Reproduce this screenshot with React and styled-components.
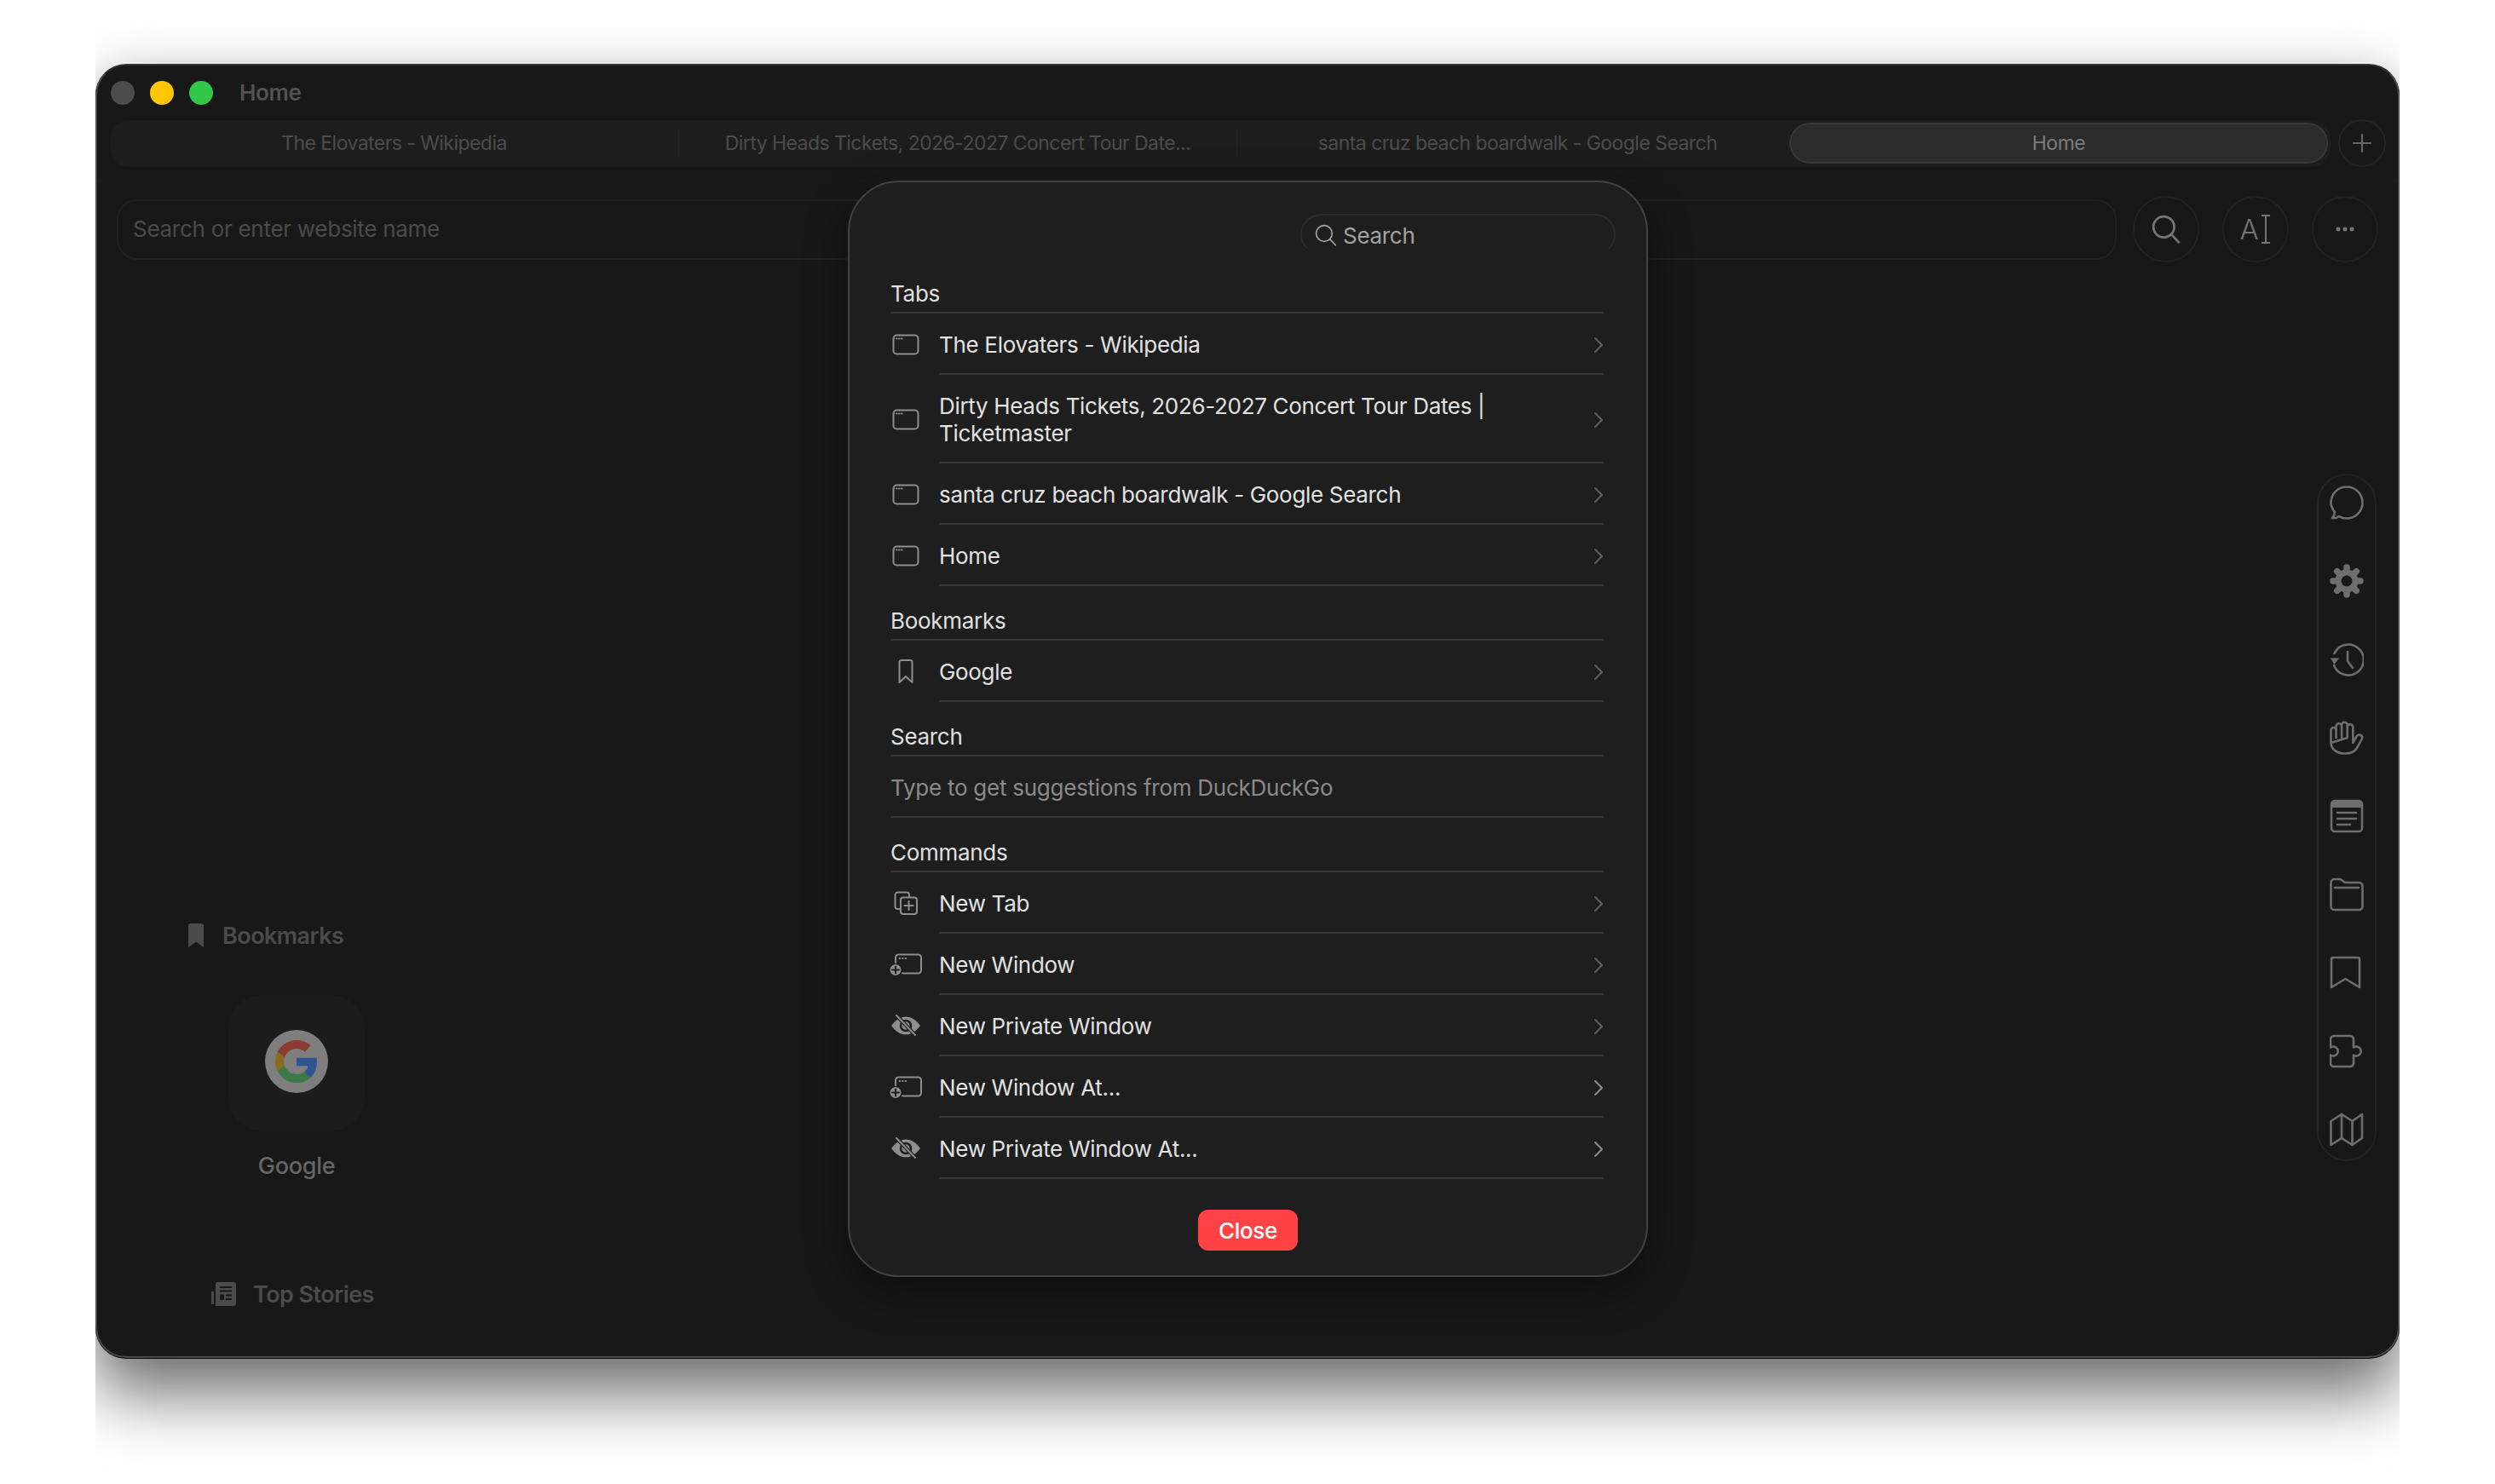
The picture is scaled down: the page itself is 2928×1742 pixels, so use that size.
import React from "react";
import styled, { createGlobalStyle } from "styled-components";

const GlobalStyle = createGlobalStyle`
  html, body {
    margin: 0;
    background: #fff;
    font-family: Inter, "Noto Sans", "Liberation Sans", sans-serif;
  }
  * { box-sizing: border-box; }
`;

const Stage = styled.div`
  width: 2704px;
  height: 1742px;
  margin-left: 112px;
  padding-top: 75px;
  overflow: hidden;
`;

const Window = styled.div`
  position: relative;
  height: 1519px;
  display: flex;
  flex-direction: column;
  background: #181818;
  border: 2px solid #4a4a4a;
  border-top-color: #2e2e2e;
  border-radius: 36px;
  box-shadow: 0 1px 0 #000, 0 46px 76px rgba(0, 0, 0, 0.52), 0 0 56px rgba(0, 0, 0, 0.12);
`;

const TitleBar = styled.div`
  height: 63px;
  display: flex;
  align-items: center;
  gap: 18px;
  padding-left: 16px;
`;

const Light = styled.span`
  width: 28px;
  height: 28px;
  border-radius: 50%;
  background: ${p => p.$color};
`;

const WindowTitle = styled.span`
  margin-left: 13px;
  font-size: 26px;
  font-weight: 600;
  letter-spacing: -0.4px;
  color: #525252;
`;

const TabRow = styled.div`
  display: flex;
  align-items: center;
  gap: 9px;
  padding: 0 14px 15px 15px;
  border-bottom: 1px solid #1c1c1c;
`;

const TabStrip = styled.div`
  width: 2606px;
  height: 55px;
  display: flex;
  align-items: center;
  background: #1d1d1d;
  border-radius: 22px;
  padding-right: 3px;
`;

const Tab = styled.div`
  width: ${p => p.$width}px;
  height: 35px;
  display: flex;
  align-items: center;
  justify-content: center;
  font-size: 23px;
  letter-spacing: -0.55px;
  color: #4c4c4c;
  border-right: 1px solid #242424;
  &:nth-child(3) {
    border-right: none;
    padding-left: 10px;
  }
`;

const ActiveTab = styled.div`
  flex: 1;
  height: 48px;
  display: flex;
  align-items: center;
  justify-content: center;
  font-size: 23px;
  letter-spacing: -0.5px;
  color: #7c7c7c;
  background: #2b2b2b;
  border: 2px solid #383838;
  border-radius: 24px;
`;

const NewTabButton = styled.div`
  width: 56px;
  height: 56px;
  display: flex;
  align-items: center;
  justify-content: center;
  border: 2px solid #262626;
  border-radius: 50%;
  color: #666;
`;

const UrlRow = styled.div`
  height: 80px;
  margin-top: 17px;
  display: flex;
  align-items: center;
  padding: 0 23px;
`;

const UrlBar = styled.div`
  width: 2347px;
  height: 71px;
  margin-right: 19px;
  display: flex;
  align-items: center;
  padding: 0 0 2px 17px;
  border: 2px solid #212121;
  border-radius: 24px;
  font-size: 26px;
  letter-spacing: -0.28px;
  color: #4b4b4b;
`;

const RoundButton = styled.div`
  width: 78px;
  height: 78px;
  margin-right: 27px;
  display: flex;
  align-items: center;
  justify-content: center;
  gap: 1px;
  border: 2px solid #222;
  border-radius: 50%;
  color: #757575;
  &:last-child { margin-right: 0; }
`;

const TextSizeLetter = styled.span`
  font-size: 33px;
  font-weight: 300;
  line-height: 1;
`;

const Body = styled.div`
  flex: 1;
  display: flex;
  justify-content: space-between;
  align-items: flex-start;
`;

const HomeColumn = styled.div`
  padding-top: 772px;
`;

const HomeHeading = styled.div`
  display: flex;
  align-items: center;
  gap: ${p => p.$gap}px;
  height: 34px;
  margin-left: ${p => p.$indent}px;
  font-size: 27px;
  font-weight: 600;
  letter-spacing: -0.55px;
  color: #4b4b4b;
`;

const BookmarkTile = styled.div`
  width: 160px;
  height: 160px;
  margin: 53px 0 0 154px;
  display: flex;
  align-items: center;
  justify-content: center;
  background: #1c1c1c;
  border-radius: 40px;
`;

const LogoDisc = styled.div`
  width: 74px;
  height: 74px;
  margin-bottom: 4px;
  display: flex;
  align-items: center;
  justify-content: center;
  background: #7e7e7e;
  border-radius: 50%;
`;

const TileLabel = styled.div`
  width: 160px;
  margin: 25px 0 117px 154px;
  text-align: center;
  font-size: 27px;
  font-weight: 500;
  line-height: 32px;
  letter-spacing: -0.3px;
  color: #666;
`;

const SideRail = styled.div`
  width: 70px;
  height: 807px;
  margin: 247px 25px 0 0;
  padding-top: 12px;
  display: flex;
  flex-direction: column;
  align-items: center;
  gap: 52px;
  border: 2px solid #232323;
  border-radius: 35px;
  color: #6e6e6e;
`;

const Modal = styled.div`
  position: absolute;
  left: 881px;
  top: 135px;
  width: 939px;
  height: 1287px;
  padding: 37px 50px 0 48px;
  background: #1e1e1e;
  border: 2px solid #424242;
  border-radius: 60px;
  box-shadow: 0 16px 50px rgba(0, 0, 0, 0.45);
`;

const ModalSearchRow = styled.div`
  display: flex;
  justify-content: flex-end;
  margin-right: -14px;
`;

const ModalSearch = styled.div`
  width: 370px;
  height: 48px;
  display: flex;
  align-items: center;
  gap: 7px;
  padding: 2px 0 0 15px;
  border: 2px solid #2a2a2a;
  border-bottom-color: transparent;
  border-radius: 24px;
  font-size: 26px;
  letter-spacing: -0.3px;
  color: #a2a2a2;
`;

const SectionTitle = styled.div`
  height: 64px;
  padding-top: 25px;
  line-height: 32px;
  border-bottom: 2px solid #333;
  font-size: 26px;
  letter-spacing: -0.3px;
  color: #e0e0e0;
`;

const FirstSection = styled.div`
  margin-top: 5px;
`;

const Row = styled.div`
  display: flex;
  align-items: center;
  color: ${p => (p.$strong ? "#8f8f8f" : "#5f5f5f")};
`;

const RowIcon = styled.div`
  width: 36px;
  margin-right: 21px;
  flex-shrink: 0;
  display: flex;
  justify-content: center;
  color: #8e8e8e;
`;

const RowBody = styled.div`
  flex: 1;
  min-height: 72px;
  padding: 21px 0 17px;
  display: flex;
  align-items: center;
  justify-content: space-between;
  border-bottom: 2px solid #333;
`;

const RowLabel = styled.div`
  width: 720px;
  font-size: 26px;
  line-height: 32px;
  letter-spacing: -0.32px;
  color: #e2e2e2;
`;

const HintRow = styled.div`
  height: 72px;
  padding-top: 21px;
  line-height: 32px;
  border-bottom: 2px solid #333;
  font-size: 26px;
  letter-spacing: -0.25px;
  color: #8a8a8a;
`;

const CloseRow = styled.div`
  display: flex;
  justify-content: center;
  margin-top: 36px;
  padding-left: 2px;
`;

const CloseButton = styled.div`
  width: 117px;
  height: 48px;
  display: flex;
  align-items: center;
  justify-content: center;
  background: #ff4245;
  border-radius: 12px;
  font-size: 26px;
  font-weight: 500;
  letter-spacing: -0.3px;
  color: #fff;
`;

const Glyph = styled.svg`
  display: block;
  flex-shrink: 0;
  fill: none;
  stroke: currentColor;
  stroke-linecap: round;
  stroke-linejoin: round;
`;

const TabGlyph = () => (
  <Glyph width="32" height="25" viewBox="0 0 32 25" strokeWidth="2">
    <rect x="1.5" y="1.5" width="29" height="22" rx="4" />
    <path d="M5 5.5h.5M8 5.5h.5M11 5.5h.5" />
  </Glyph>
);

const BookmarkGlyph = () => (
  <Glyph width="20" height="28" viewBox="0 0 20 28" strokeWidth="2">
    <path d="M2.5 3a2 2 0 0 1 2-2h11a2 2 0 0 1 2 2v24L10 20l-7.5 7z" />
  </Glyph>
);

const NewTabGlyph = () => (
  <Glyph width="28" height="28" viewBox="0 0 28 28" strokeWidth="2">
    <path d="M7 21H4.500A3 3 0 0 1 1.500 18V4.500A3 3 0 0 1 4.500 1.500H15A3 3 0 0 1 18 4.500V7" />
    <rect x="8" y="7.500" width="19" height="19.500" rx="3" />
    <path d="M17.500 12v10M12.500 17h10" />
  </Glyph>
);

const NewWindowGlyph = () => (
  <Glyph width="38" height="27" viewBox="0 0 38 27" strokeWidth="2">
    <path d="M7 11V5a3.500 3.500 0 0 1 3.500-3.500h23A3.500 3.500 0 0 1 37 5v15a3.500 3.500 0 0 1-3.500 3.500H15" />
    <path d="M11.500 6h.5M15 6h.5M18.500 6h.5" />
    <circle cx="7" cy="19.500" r="6.500" fill="currentColor" stroke="none" />
    <path d="M7 15.500v8M3 19.500h8" stroke="#1e1e1e" />
  </Glyph>
);

const PrivateGlyph = () => (
  <Glyph width="36" height="26" viewBox="0 0 36 26" strokeWidth="2">
    <path d="M1 13C6 6.500 11.500 2.500 18 2.500S30 6.500 35 13c-5 6.500-10.500 10.500-17 10.500S6 19.500 1 13z" fill="currentColor" stroke="none" />
    <circle cx="18" cy="13" r="6" fill="none" stroke="#1e1e1e" strokeWidth="2.500" />
    <path d="M7 1l22 23" stroke="#1e1e1e" strokeWidth="4.500" />
    <path d="M7 1l22 23" />
  </Glyph>
);

const Chevron = () => (
  <Glyph width="12" height="20" viewBox="0 0 12 20" strokeWidth="2">
    <path d="M2 2l8 8-8 8" />
  </Glyph>
);

const SearchGlyph = ({ size, width }) => (
  <Glyph width={size} height={size} viewBox="0 0 32 32" strokeWidth={width}>
    <circle cx="13.500" cy="13.500" r="11.500" />
    <path d="M22 22l8 8.500" />
  </Glyph>
);

const CursorGlyph = () => (
  <Glyph width="14" height="36" viewBox="0 0 14 36" strokeWidth="2">
    <path d="M2 2h10M7 2v32M2 34h10" strokeLinecap="butt" />
  </Glyph>
);

const DotsGlyph = () => (
  <Glyph width="22" height="6" viewBox="0 0 22 6" stroke="none">
    <circle cx="3" cy="3" r="2.500" fill="currentColor" stroke="none" />
    <circle cx="11" cy="3" r="2.500" fill="currentColor" stroke="none" />
    <circle cx="19" cy="3" r="2.500" fill="currentColor" stroke="none" />
  </Glyph>
);

const PlusGlyph = () => (
  <Glyph width="24" height="24" viewBox="0 0 24 24" strokeWidth="2">
    <path d="M12 2v20M2 12h20" />
  </Glyph>
);

const RailSvg = ({ children }) => (
  <Glyph width="40" height="40" viewBox="0 0 40 40" strokeWidth="2.600">
    {children}
  </Glyph>
);

const gearTeeth = [0, 45, 90, 135, 180, 225, 270, 315];

const railIcons = [
  <RailSvg key="chat">
    <path d="M20 1.500c10.200 0 18.500 8.300 18.500 18.500S30.200 38.500 20 38.500c-3.300 0-6.400-.9-9-2.400-2 1.500-4.800 2.400-8 2 1.800-1.900 2.800-4.300 3-7C3.400 28 1.500 24.200 1.500 20 1.500 9.800 9.800 1.500 20 1.500z" />
  </RailSvg>,
  <RailSvg key="gear">
    <circle cx="20" cy="20" r="13.500" fill="currentColor" stroke="none" />
    {gearTeeth.map(a => (
      <path key={a} d="M20 8V4" strokeWidth="7.500" transform={`rotate(${a} 20 20)`} />
    ))}
    <circle cx="20" cy="20" r="6.500" fill="#181818" stroke="none" />
  </RailSvg>,
  <RailSvg key="history">
    <path d="M5.500 13A18 18 0 1 1 5 27" />
    <path d="M1 18.500h10L5.500 26z" fill="currentColor" stroke="none" />
    <path d="M21 11v11l6 8" />
  </RailSvg>,
  <RailSvg key="hand">
    <path d="M1.500 26V11a3 3 0 0 1 6 0v9M7.500 20V6.500a3.300 3.300 0 0 1 6.600 0V20M14.100 20V5a3.300 3.300 0 0 1 6.600 0v15M20.700 20V7.500a3.300 3.300 0 0 1 6.600 0V26l4.200-7.500a3.500 3.500 0 0 1 6.500 2.500L32 32c-3 5-8 6.500-14 6.500-10 0-16.500-5.500-16.500-12.500z" />
  </RailSvg>,
  <RailSvg key="news">
    <rect x="2" y="2" width="36" height="36" rx="4" />
    <path d="M2 6a4 4 0 0 1 4-4h28a4 4 0 0 1 4 4v4H2z" fill="currentColor" stroke="none" />
    <path d="M9 16h22M9 23h22M9 30h15" />
  </RailSvg>,
  <RailSvg key="folder">
    <path d="M1.500 6A4 4 0 0 1 5.500 2h6c3.500 0 4 4 7.500 4h15.500a4 4 0 0 1 4 4v24a4 4 0 0 1-4 4h-29a4 4 0 0 1-4-4z" />
    <path d="M6 12h28" />
  </RailSvg>,
  <RailSvg key="bookmark">
    <path d="M2 4a2 2 0 0 1 2-2h29a2 2 0 0 1 2 2v33L18.500 27 2 37z" />
  </RailSvg>,
  <RailSvg key="puzzle">
    <path d="M5 2h19a4 4 0 0 1 4 4v9.500a5.500 5.500 0 1 1 0 9V34a4 4 0 0 1-4 4H5a4 4 0 0 1-4-4v-9.500a5.500 5.500 0 1 0 0-9V6a4 4 0 0 1 4-4z" />
  </RailSvg>,
  <RailSvg key="map">
    <path d="M1.500 10L14 2l12.500 8L38 2v28l-11.500 8L14 30 1.500 38z" />
    <path d="M14 2v28M26.500 10v28" />
  </RailSvg>
];

const BookmarkFilled = () => (
  <Glyph width="18" height="28" viewBox="0 0 18 28" stroke="none">
    <path d="M0 2.500A2.500 2.500 0 0 1 2.500 0h13A2.500 2.500 0 0 1 18 2.500V28l-9-6.500L0 28z" fill="currentColor" stroke="none" />
  </Glyph>
);

const NewsFilled = () => (
  <Glyph width="29" height="28" viewBox="0 0 29 28" stroke="none">
    <path d="M0 11h3v15H1a1 1 0 0 1-1-1z" fill="currentColor" stroke="none" />
    <path d="M7 0h19a3 3 0 0 1 3 3v22a3 3 0 0 1-3 3H5V2a2 2 0 0 1 2-2z" fill="currentColor" stroke="none" />
    <path d="M10 6h14M10 10.500h14M17 15.500h7M17 20h7" stroke="#181818" strokeWidth="2" strokeLinecap="butt" />
    <rect x="10" y="14.500" width="5" height="6.500" fill="#181818" stroke="none" />
  </Glyph>
);

const GoogleMark = () => (
  <svg width="50" height="50" viewBox="0 0 48 48">
    <path fill="#8b3b31" d="M24 9.500c3.540 0 6.710 1.220 9.210 3.600l6.850-6.850C35.900 2.380 30.470 0 24 0 14.620 0 6.510 5.380 2.560 13.220l7.980 6.190C12.430 13.720 17.740 9.500 24 9.500z" />
    <path fill="#2f5590" d="M46.980 24.550c0-1.570-.15-3.090-.38-4.550H24v9.020h12.940c-.58 2.960-2.260 5.480-4.780 7.180l7.730 6c4.510-4.180 7.090-10.360 7.090-17.650z" />
    <path fill="#8a6a20" d="M10.530 28.590c-.48-1.450-.76-2.990-.76-4.590s.27-3.140.76-4.590l-7.980-6.190C.92 16.460 0 20.120 0 24c0 3.880.92 7.540 2.560 10.780l7.970-6.190z" />
    <path fill="#3b7a45" d="M24 48c6.480 0 11.930-2.130 15.890-5.810l-7.730-6c-2.150 1.450-4.920 2.300-8.160 2.300-6.260 0-11.570-4.220-13.470-9.910l-7.980 6.190C6.510 42.620 14.620 48 24 48z" />
  </svg>
);

const tabs = [
  { title: "The Elovaters - Wikipedia", width: 668 },
  { title: "Dirty Heads Tickets, 2026-2027 Concert Tour Date...", width: 655 },
  { title: "santa cruz beach boardwalk - Google Search", width: 648 }
];

const sections = [
  {
    title: "Tabs",
    rows: [
      { label: "The Elovaters - Wikipedia", icon: <TabGlyph /> },
      { label: "Dirty Heads Tickets, 2026-2027 Concert Tour Dates | Ticketmaster", icon: <TabGlyph /> },
      { label: "santa cruz beach boardwalk - Google Search", icon: <TabGlyph /> },
      { label: "Home", icon: <TabGlyph /> }
    ]
  },
  {
    title: "Bookmarks",
    rows: [{ label: "Google", icon: <BookmarkGlyph /> }]
  },
  {
    title: "Search",
    hint: "Type to get suggestions from DuckDuckGo"
  },
  {
    title: "Commands",
    rows: [
      { label: "New Tab", icon: <NewTabGlyph /> },
      { label: "New Window", icon: <NewWindowGlyph /> },
      { label: "New Private Window", icon: <PrivateGlyph /> },
      { label: "New Window At...", icon: <NewWindowGlyph />, strong: true },
      { label: "New Private Window At...", icon: <PrivateGlyph />, strong: true }
    ]
  }
];

function CommandSection({ section }) {
  return (
    <>
      <SectionTitle>{section.title}</SectionTitle>
      {section.hint && <HintRow>{section.hint}</HintRow>}
      {section.rows &&
        section.rows.map(row => (
          <Row key={row.label} $strong={row.strong}>
            <RowIcon>{row.icon}</RowIcon>
            <RowBody>
              <RowLabel>{row.label}</RowLabel>
              <Chevron />
            </RowBody>
          </Row>
        ))}
    </>
  );
}

export default function App() {
  return (
    <>
      <GlobalStyle />
      <Stage>
        <Window>
          <TitleBar>
            <Light $color="#4c4c4c" />
            <Light $color="#fec702" />
            <Light $color="#33c748" />
            <WindowTitle>Home</WindowTitle>
          </TitleBar>

          <TabRow>
            <TabStrip>
              {tabs.map(tab => (
                <Tab key={tab.title} $width={tab.width}>
                  {tab.title}
                </Tab>
              ))}
              <ActiveTab>Home</ActiveTab>
            </TabStrip>
            <NewTabButton>
              <PlusGlyph />
            </NewTabButton>
          </TabRow>

          <UrlRow>
            <UrlBar>Search or enter website name</UrlBar>
            <RoundButton>
              <SearchGlyph size={34} width={2.600} />
            </RoundButton>
            <RoundButton>
              <TextSizeLetter>A</TextSizeLetter>
              <CursorGlyph />
            </RoundButton>
            <RoundButton>
              <DotsGlyph />
            </RoundButton>
          </UrlRow>

          <Body>
            <HomeColumn>
              <HomeHeading $indent={107} $gap={22}>
                <BookmarkFilled />
                Bookmarks
              </HomeHeading>
              <BookmarkTile>
                <LogoDisc>
                  <GoogleMark />
                </LogoDisc>
              </BookmarkTile>
              <TileLabel>Google</TileLabel>
              <HomeHeading $indent={134} $gap={20}>
                <NewsFilled />
                Top Stories
              </HomeHeading>
            </HomeColumn>
            <SideRail>{railIcons}</SideRail>
          </Body>

          <Modal>
            <ModalSearchRow>
              <ModalSearch>
                <SearchGlyph size={26} width={2} />
                Search
              </ModalSearch>
            </ModalSearchRow>
            <FirstSection>
              {sections.map(section => (
                <CommandSection key={section.title} section={section} />
              ))}
            </FirstSection>
            <CloseRow>
              <CloseButton>Close</CloseButton>
            </CloseRow>
          </Modal>
        </Window>
      </Stage>
    </>
  );
}
